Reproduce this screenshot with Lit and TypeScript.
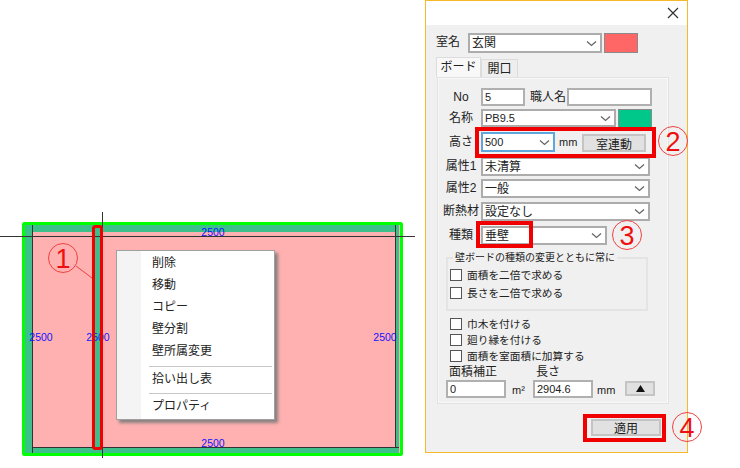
import { LitElement, html, css, svg } from "lit";
import { customElement } from "lit/decorators.js";

const chevron = html`<svg class="chev" width="11" height="7" viewBox="0 0 11 7"><path d="M1 1.5 5.5 5.5 10 1.5" fill="none" stroke="#666" stroke-width="1.3"/></svg>`;

const combo = (text: string, cls = "") => html`<div class="combo ${cls}"><span>${text}</span>${chevron}</div>`;
const check = (text: string) => html`<label class="check"><i></i><span>${text}</span></label>`;

@customElement("app-root")
export class AppRoot extends LitElement {
  static styles = css`
    :host { display: block; width: 740px; height: 468px; background: #fff; position: relative; overflow: hidden;
      font-family: "Liberation Sans", "Noto Sans CJK JP", sans-serif; font-size: 12px; color: #222; }
    .page { display: flex; width: 740px; height: 468px; }
    .stage { width: 425px; height: 468px; position: relative; flex: none; }
    .stage svg { display: block; }
    .dim { font: 10.5px "Liberation Sans", sans-serif; fill: #1414ff; text-anchor: middle; }
    .menu { position: absolute; left: 116px; top: 250px; width: 159px; height: 170px; box-sizing: border-box;
      background: linear-gradient(90deg, #f4f4f4 0 24px, #fff 24px); border: 1px solid #a0a0a0;
      box-shadow: 3px 3px 3px #8a8080; padding-top: 1px; display: flex; flex-direction: column; }
    .mi { height: 22px; line-height: 22px; padding-left: 35px; flex: none; }
    .sep { height: 1px; background: #c8c8c8; margin: 4px 2px 2px 32px; flex: none; }
    .sep + .mi { height: 20px; line-height: 20px; }

    .dialog { width: 263px; height: 453px; box-sizing: border-box; border: 1px solid #f5b92a;
      background: #f0f0f0; display: flex; flex-direction: column; flex: none; }
    .title { height: 24px; background: #fff; display: flex; justify-content: flex-end; align-items: center; padding-right: 8px; flex: none; }
    .room { display: flex; align-items: flex-start; height: 32px; padding: 8px 0 0 10px; gap: 2px; flex: none; box-sizing: content-box; }
    .room > .lbl { width: 30px; line-height: 18px; }
    .room .combo { width: 134px; height: 20px; }
    .swatch { border: 1px solid #8a8a8a; box-sizing: border-box; flex: none; }
    .s1 { width: 34px; height: 20px; background: #ff6666; }
    .s2 { width: 34px; height: 19px; background: #00c78a; }
    .tabs { display: flex; padding-left: 10px; height: 20px; margin-top: -8px; flex: none; align-items: flex-end; }
    .tab { box-sizing: border-box; border: 1px solid #dcdcdc; border-bottom: none; text-align: center; }
    .tab.on { width: 45px; height: 20px; background: #f8f8f8; line-height: 18px; }
    .tab.off { width: 37px; height: 18px; line-height: 19px; background: #eee; }
    .panel { margin-left: 11px; width: 232px; height: 327px; box-sizing: border-box; border: 2px solid #f9f9f9; outline: 1px solid #e2e2e2; outline-offset: -1px;
      padding: 9px 0 0 2px; flex: none; }
    .form { display: grid; grid-template-columns: 40px 1fr; grid-template-rows: 21px 23px 25px 22px 23px 24px 31px; }
    .form > .lbl { text-align: center; line-height: 18px; }
    .form > .lbl.tall { line-height: 20px; }
    .line { display: flex; align-items: flex-start; }
    .line.tight { gap: 2px; }
    .input { box-sizing: border-box; border: 2px solid #b0b0b0; background: #fff; height: 18px; line-height: 14px; padding-left: 2px; font-size: 11px; flex: none; }
    .w44 { width: 44px; }
    .w85 { width: 85px; }
    .worker { width: 42px; text-align: right; padding-right: 1px; box-sizing: border-box; line-height: 18px; white-space: nowrap; }
    .combo { box-sizing: border-box; border: 2px solid #acacac; background: #fff; display: flex; align-items: center; justify-content: space-between;
      padding: 0 3px 0 2px; flex: none; font-size: 12px; }
    .combo span { line-height: 1; }
    .w135 { width: 135px; height: 18px; font-size: 11px; }
    .focus { width: 74px; height: 20px; border-color: #5fa6dd; font-size: 11px; }
    .wide { width: 169px; height: 19px; }
    .w126 { width: 126px; height: 19px; }
    .btn { box-sizing: border-box; background: #e1e1e1; border: 2px solid #c4c4c4; display: flex; align-items: center; justify-content: center; flex: none; }
    .link { width: 64px; height: 18px; margin: 2px 0 0 6px; }
    .unit { font-size: 11px; width: 17px; margin-left: 4px; line-height: 20px; flex: none; }
    .group { position: relative; margin-left: 5px; width: 202px; height: 54px; box-sizing: border-box; border: 2px solid #e4e4e4; padding: 10px 0 0 2px; display: flex; flex-direction: column; gap: 6px; }
    .legend { position: absolute; left: 5px; top: -8px; background: #f0f0f0; padding: 0 2px; line-height: 14px; font-size: 10px; white-space: nowrap; }
    .check { display: flex; align-items: center; gap: 5px; height: 12px; line-height: 12px; font-size: 10.7px; white-space: nowrap; }
    .check i { width: 12px; height: 12px; box-sizing: border-box; border: 1px solid #555; background: #fff; flex: none; }
    .checks { margin: 7px 0 0 9px; display: flex; flex-direction: column; gap: 4px; }
    .bottom { margin: 3px 0 0 5px; display: grid; grid-template-columns: 87px 92px 1fr; }
    .bottom .cap { line-height: 14px; padding-left: 3px; height: 15px; }
    .val { display: flex; align-items: flex-start; }
    .val .input { width: 60px; }
    .val .u { margin-left: 6px; font-size: 11px; line-height: 20px; }
    .val .u.mm { margin-left: 4px; }
    .tri { width: 30px; height: 15px; margin-top: 1px; }
    .foot { display: flex; justify-content: flex-end; padding: 15px 26px 0 0; }
    .apply { width: 70px; height: 17px; }
    .overlay { position: absolute; left: 0; top: 0; pointer-events: none; }
    .num { font: 400 27px "Liberation Sans", sans-serif; fill: #ee1010; text-anchor: middle; }
  `;

  render() {
    return html`
      <div class="page">
        <div class="stage">
          <svg width="425" height="468">
            <rect x="24" y="224" width="377" height="230" fill="#ffb0b0"/>
            <path d="M25 225H399V232H33V447H399V453H25Z M395 232H399V447H395Z M95 232H100V447H95Z" fill="#3cbf8b" fill-rule="evenodd"/>
            <rect x="23.5" y="223.5" width="378" height="231" rx="1" fill="none" stroke="#00ff00" stroke-width="3"/>
            <path d="M0 236.5H415M32.5 225V453M102.5 212V458M33 447.5H399M395.5 225V447" stroke="#333" stroke-width="1" fill="none"/>
            <text class="dim" x="213" y="236">2500</text>
            <text class="dim" x="213" y="447">2500</text>
            <text class="dim" x="41" y="341">2500</text>
            <text class="dim" x="98" y="341">2500</text>
            <text class="dim" x="385" y="341">2500</text>
          </svg>
          <div class="menu">
            <div class="mi">削除</div>
            <div class="mi">移動</div>
            <div class="mi">コピー</div>
            <div class="mi">壁分割</div>
            <div class="mi">壁所属変更</div>
            <div class="sep"></div>
            <div class="mi">拾い出し表</div>
            <div class="sep"></div>
            <div class="mi">プロパティ</div>
          </div>
        </div>
        <div class="dialog">
          <div class="title">
            <svg width="12" height="12" viewBox="0 0 12 12"><path d="M1 1 11 11M11 1 1 11" stroke="#333" stroke-width="1.2"/></svg>
          </div>
          <div class="room">
            <div class="lbl">室名</div>
            ${combo("玄関")}
            <div class="swatch s1"></div>
          </div>
          <div class="tabs">
            <div class="tab on">ボード</div>
            <div class="tab off">開口</div>
          </div>
          <div class="panel">
            <div class="form">
              <div class="lbl">No</div>
              <div class="line">
                <div class="input w44">5</div>
                <div class="worker">職人名</div>
                <div class="input w85"></div>
              </div>
              <div class="lbl">名称</div>
              <div class="line tight">${combo("PB9.5", "w135")}<div class="swatch s2"></div></div>
              <div class="lbl tall">高さ</div>
              <div class="line">
                ${combo("500", "focus")}
                <span class="unit">mm</span>
                <div class="btn link">室連動</div>
              </div>
              <div class="lbl">属性1</div>
              <div class="line">${combo("未清算", "wide")}</div>
              <div class="lbl">属性2</div>
              <div class="line">${combo("一般", "wide")}</div>
              <div class="lbl">断熱材</div>
              <div class="line">${combo("設定なし", "wide")}</div>
              <div class="lbl">種類</div>
              <div class="line">${combo("垂壁", "w126")}</div>
            </div>
            <div class="group">
              <div class="legend">壁ボードの種類の変更とともに常に</div>
              ${check("面積を二倍で求める")}
              ${check("長さを二倍で求める")}
            </div>
            <div class="checks">
              ${check("巾木を付ける")}
              ${check("廻り縁を付ける")}
              ${check("面積を室面積に加算する")}
            </div>
            <div class="bottom">
              <div class="cap">面積補正</div>
              <div class="cap">長さ</div>
              <div></div>
              <div class="val"><div class="input">0</div><span class="u">m²</span></div>
              <div class="val"><div class="input">2904.6</div><span class="u mm">mm</span></div>
              <div class="btn tri"><svg width="9" height="7" viewBox="0 0 9 7"><path d="M4.5 0 9 7H0Z" fill="#111"/></svg></div>
            </div>
          </div>
          <div class="foot"><div class="btn apply">適用</div></div>
        </div>
      </div>
      <svg class="overlay" width="740" height="468">
        ${svg`
          <rect x="93.5" y="226.5" width="8" height="222" rx="2" fill="none" stroke="#f00000" stroke-width="3"/>
          <path d="M76 266 92 278" stroke="#f04040" fill="none"/>
          <rect x="477" y="129" width="177" height="27" fill="none" stroke="#f00000" stroke-width="4"/>
          <rect x="478" y="223" width="53" height="23" fill="none" stroke="#f00000" stroke-width="4"/>
          <rect x="585" y="416" width="79" height="24" fill="none" stroke="#f00000" stroke-width="4"/>
          <circle cx="63" cy="258" r="14.5" fill="none" stroke="#f04040"/>
          <circle cx="673" cy="141" r="14.5" fill="none" stroke="#f04040"/>
          <circle cx="627" cy="235" r="14.5" fill="none" stroke="#f04040"/>
          <circle cx="687" cy="427" r="14.5" fill="none" stroke="#f04040"/>
          <text class="num" x="63" y="268">1</text>
          <text class="num" x="673" y="151">2</text>
          <text class="num" x="627" y="245">3</text>
          <text class="num" x="687" y="437">4</text>
        `}
      </svg>
    `;
  }
}
